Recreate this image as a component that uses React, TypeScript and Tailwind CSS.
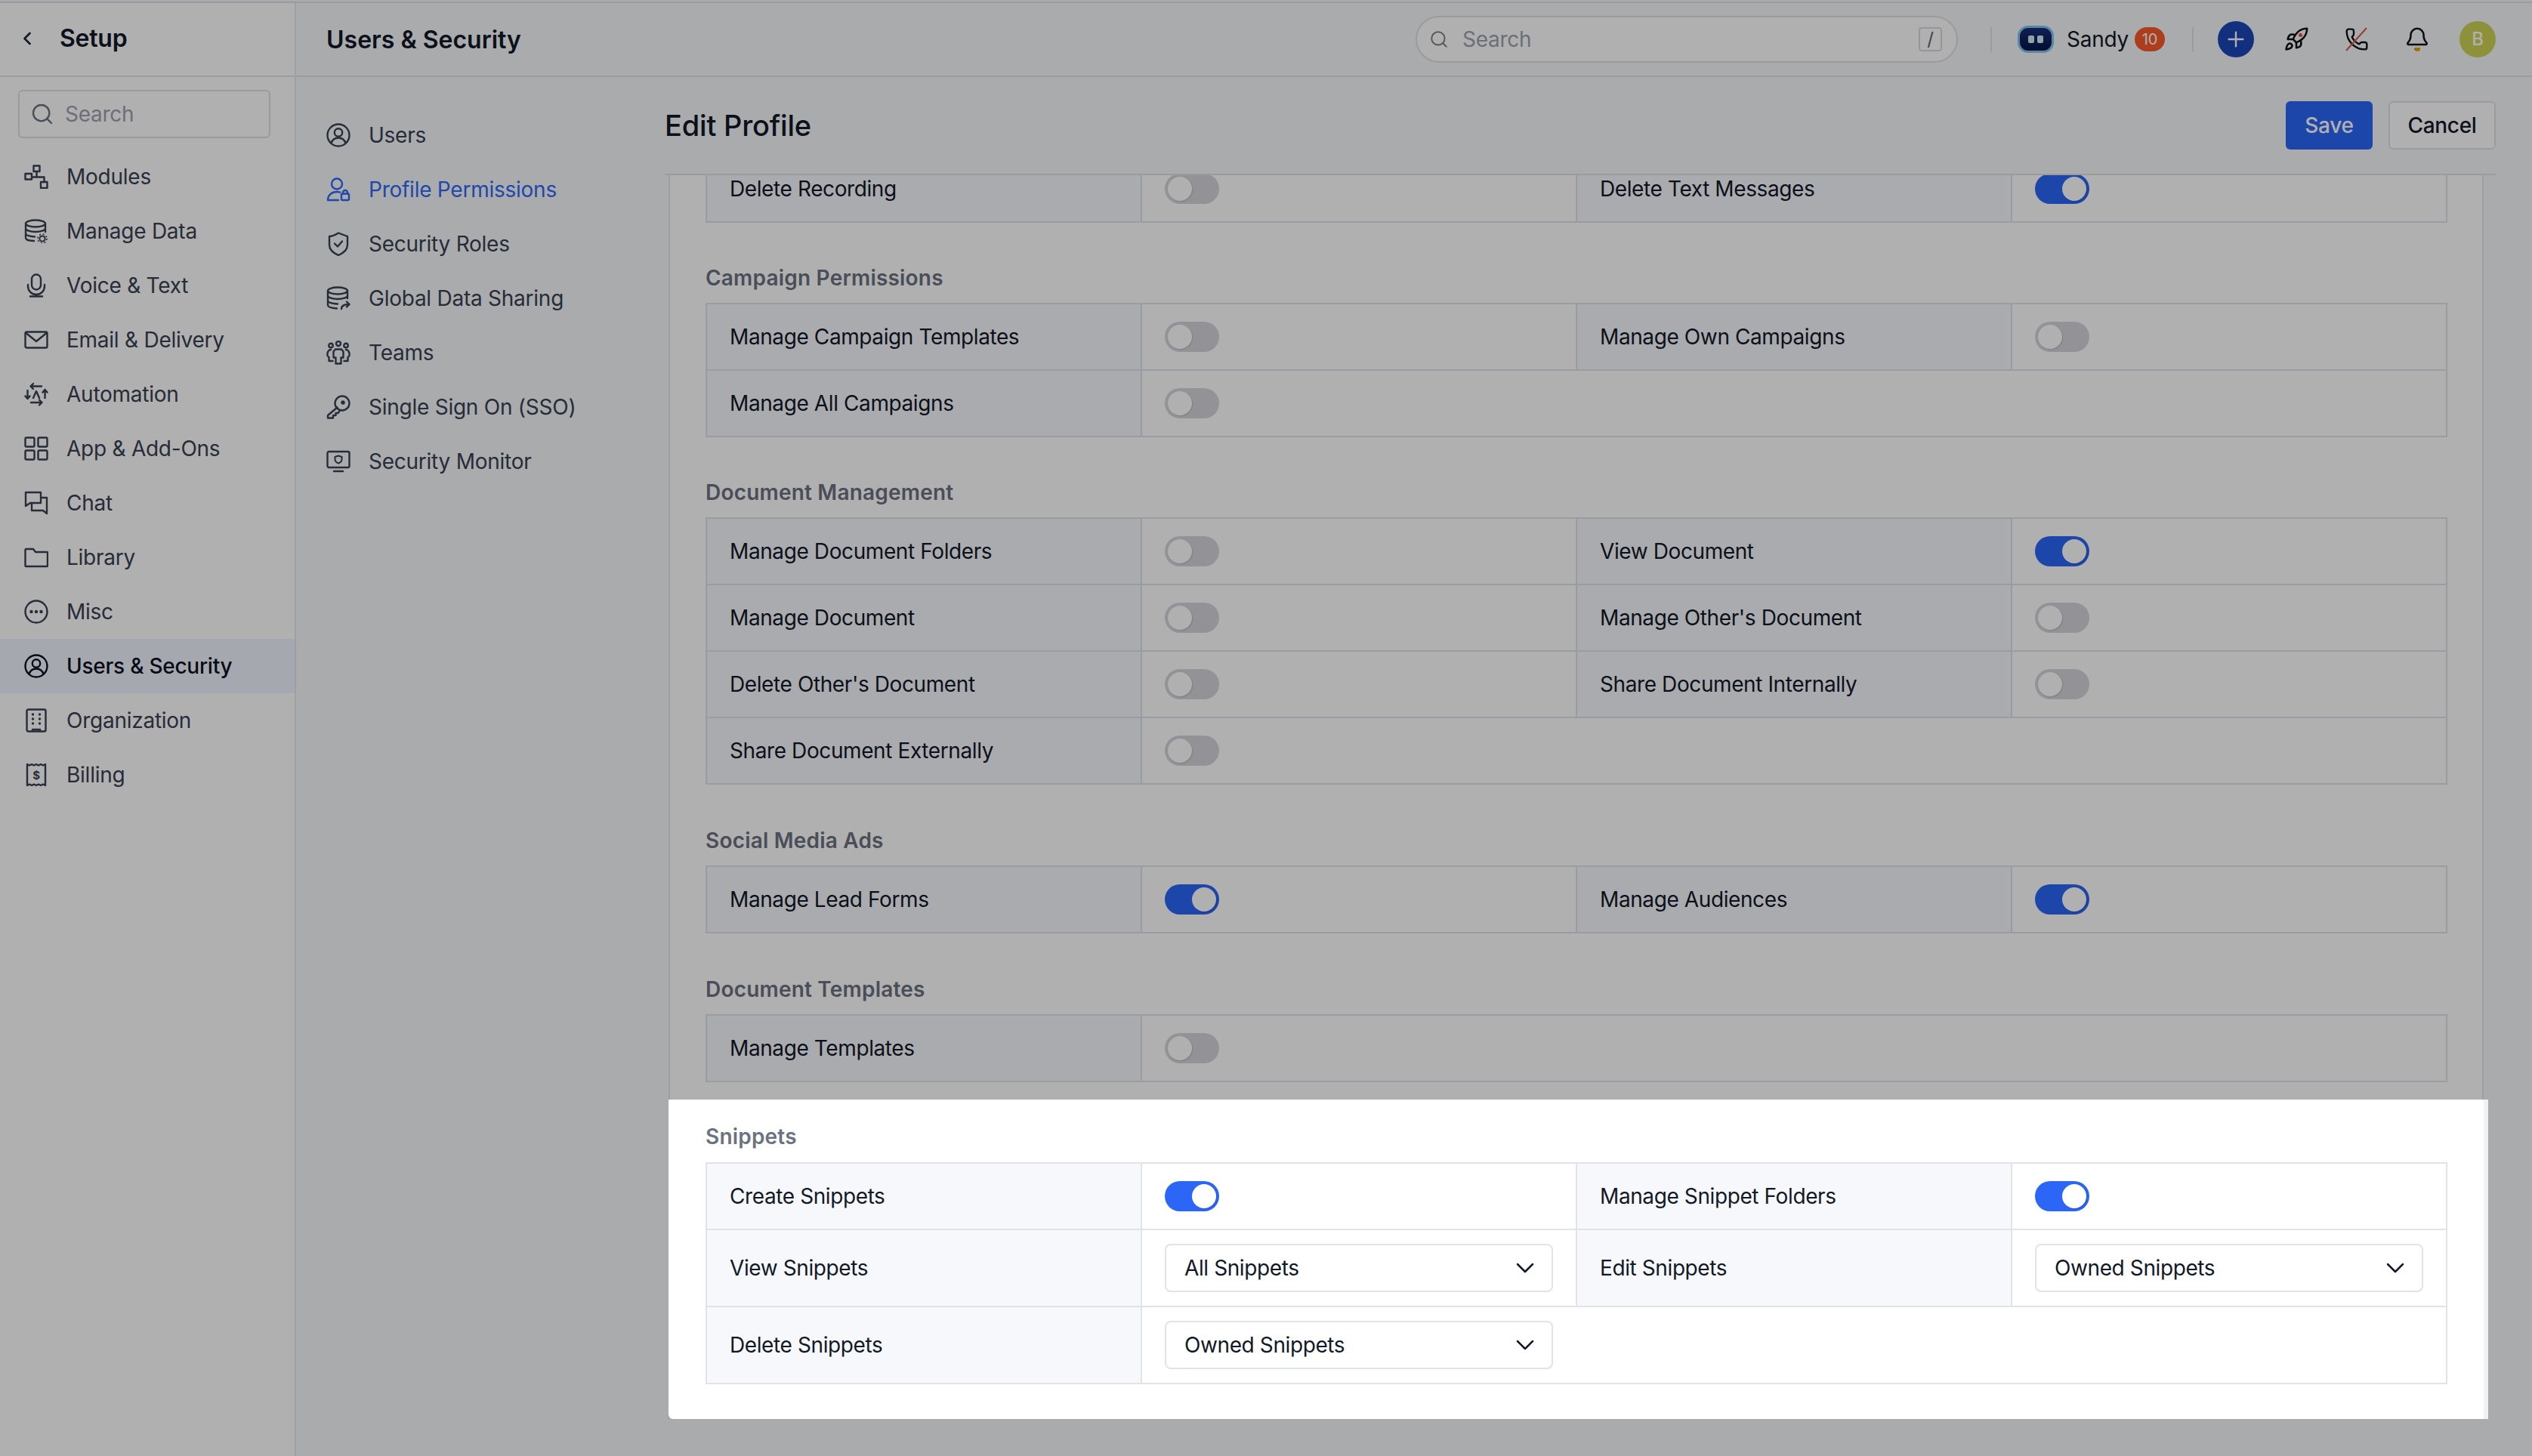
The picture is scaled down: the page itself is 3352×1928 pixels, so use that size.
import React from "react";
import { ChevronDown, ChevronLeft, Search, Plus, Rocket, Phone, Bell } from "lucide-react";

const Ic = ({ children, className = "" }: { children: React.ReactNode; className?: string }) => (
  <svg viewBox="0 0 32 32" fill="none" stroke="currentColor" strokeWidth="2.4" strokeLinecap="round" strokeLinejoin="round" className={`h-8 w-8 shrink-0 ${className}`}>
    {children}
  </svg>
);

const icons: Record<string, React.ReactNode> = {
  modules: (<><rect x="12.5" y="1.5" width="8" height="7.5" /><rect x="1.5" y="12" width="8.5" height="7.5" /><rect x="22" y="23" width="8.5" height="8" /><path d="M16.5 9v7.5M10 16.5h16.5V23" /></>),
  data: (<><ellipse cx="15" cy="6" rx="13" ry="4.5" /><path d="M2 6v19c0 2.5 5 4 11 4M28 6v11M2 12.5c0 2.5 6 4.5 13 4.5s13-2 13-4.5M2 19c0 2.4 5 4 12 4.5" /><circle cx="24" cy="26" r="3.6" strokeWidth="2" /><circle cx="24" cy="26" r="6" strokeWidth="1.6" strokeDasharray="2 2.7" strokeLinecap="butt" /></>),
  mic: (<><rect x="10" y="1.5" width="12" height="20" rx="6" /><path d="M5 15v2a11 11 0 0 0 22 0v-2M16 28v2.5M8 30.5h16" /></>),
  mail: (<><rect x="1.5" y="5.5" width="29" height="21" rx="2" /><path d="M2.5 7 16 18 29.5 7" /></>),
  auto: (<><path d="M9 5.5h14M12 2 8.5 5.5 12 9M9 27h14M20 23.5l3.5 3.5-3.5 3.5M4.5 11v11M1.5 18.5 4.5 22M7.5 18.5 4.5 22M27.5 10v11M24.5 13.5l3-3.5 3 3.5M12 21l4-9 4 9" /></>),
  apps: (<><rect x="1.5" y="1.5" width="12" height="12" rx="1.5" /><rect x="18.5" y="1.5" width="12" height="12" rx="1.5" /><rect x="1.5" y="18.5" width="12" height="12" rx="1.5" /><rect x="18.5" y="18.5" width="12" height="12" rx="1.5" /></>),
  chat: (<><path d="M2 2h20v14H8l-6 4zM22 9h8v21l-5-4H10v-10" /></>),
  folder: (<><path d="M1.5 6a1 1 0 0 1 1-1h9.5l3 4h15a1 1 0 0 1 1 1v17a1 1 0 0 1-1 1H2.5a1 1 0 0 1-1-1z" /></>),
  misc: (<><circle cx="16" cy="16" r="14.5" /><circle cx="9.5" cy="16" r="1" fill="currentColor" /><circle cx="16" cy="16" r="1" fill="currentColor" /><circle cx="22.5" cy="16" r="1" fill="currentColor" /></>),
  user: (<><circle cx="16" cy="16" r="14.5" /><circle cx="16" cy="12.5" r="5.2" /><path d="M6.5 26.5c1.5-4.5 5.2-7 9.5-7s8 2.500 9.500 7" /></>),
  org: (<><rect x="3.500" y="1.500" width="25" height="29" rx="2" /><path d="M11 30v-2h10v2" /><g fill="currentColor" stroke="none"><circle cx="11.500" cy="8" r="1.700" /><circle cx="20.500" cy="8" r="1.700" /><circle cx="11.500" cy="14" r="1.700" /><circle cx="20.500" cy="14" r="1.700" /><circle cx="11.500" cy="20" r="1.700" /><circle cx="20.500" cy="20" r="1.700" /></g></>),
  bill: (<><path d="M4 2v28l3-1.500 3 1.500 3-1.500 3 1.500 3-1.500 3 1.500 3-1.500 3 1.500V2l-3 1.500-3-1.500-3 1.500-3-1.500-3 1.500-3-1.500-3 1.500z" /><text x="16" y="21.500" textAnchor="middle" fontSize="15" fontWeight="700" fill="currentColor" stroke="none" fontFamily="Inter, sans-serif">$</text></>),
  profile: (<><circle cx="14" cy="8.500" r="7" /><path d="M2 30c0-6.500 5-11 12-11 1.500 0 2.800.2 4 .7M2 30h14" /><rect x="20" y="21.500" width="10" height="8.500" rx="1.500" /><path d="M22 21.500v-1.500a3 3 0 0 1 6 0v1.500" /></>),
  shield: (<><path d="M16 1.500 28 6v11c0 7-5 11-12 14C9 28 4 24 4 17V6c5 0 8-2 12-4.500z" /><path d="M11 15.500l4 4 6-7" /></>),
  share: (<><ellipse cx="15" cy="6" rx="13" ry="4.500" /><path d="M2 6v19c0 2.500 5 4 12 4.500M28 6v10M2 12.500c0 2.500 6 4.500 13 4.500s13-2 13-4.500M2 19c0 2.400 5 4 13 4.500M20 30c0-4 3-6 10-6M27 20.500l3.500 3.500-3.500 3.500" /></>),
  teams: (<><circle cx="16" cy="4" r="3" /><circle cx="6" cy="6.500" r="2.700" /><circle cx="26" cy="6.500" r="2.700" /><path d="M12 11.500h8l2.500 3v8h-3v8h-7v-8h-3v-8zM6 12c-3 0-5 3-4.500 8l2 2v5h5M26 12c3 0 5 3 4.500 8l-2 2v5h-5" /></>),
  key: (<><circle cx="21" cy="11" r="9.500" /><circle cx="22" cy="10" r="1.500" fill="currentColor" /><path d="M14.500 16.500 2 27v3.500h7V27h3.500v-3h3l2-3" /></>),
  monitor: (<><rect x="1.500" y="3" width="29" height="21" rx="2" /><path d="M10 29h12" /><path d="M16 8.500l4.500 1.500v3.500c0 2.500-2 4-4.500 5-2.500-1-4.500-2.500-4.500-5V10z" strokeWidth="2" /></>),
};

const leftMenu = [
  ["modules", "Modules"], ["data", "Manage Data"], ["mic", "Voice & Text"], ["mail", "Email & Delivery"],
  ["auto", "Automation"], ["apps", "App & Add-Ons"], ["chat", "Chat"], ["folder", "Library"],
  ["misc", "Misc"], ["user", "Users & Security"], ["org", "Organization"], ["bill", "Billing"],
];

const subMenu = [
  ["user", "Users"], ["profile", "Profile Permissions"], ["shield", "Security Roles"], ["share", "Global Data Sharing"],
  ["teams", "Teams"], ["key", "Single Sign On (SSO)"], ["monitor", "Security Monitor"],
];

const Toggle = ({ on }: { on: boolean }) => (
  <div className={`flex h-10 w-[72px] items-center rounded-full px-1 ${on ? "justify-end bg-[#2b66f6]" : "justify-start bg-[#d5d6db]"}`}>
    <div className="h-8 w-8 rounded-full bg-white shadow-[1px_1px_2px_rgba(0,0,0,0.15)]" />
  </div>
);

const SelectBox = ({ value }: { value: string }) => (
  <div className="flex h-16 w-[514px] items-center justify-between rounded-[8px] border-2 border-[#e1e3ea] bg-white pl-[24px] pr-[15px] text-[#111827]">
    <span>{value}</span>
    <ChevronDown size={40} strokeWidth={1.5} />
  </div>
);

type Cell = [string, boolean | string];

const Value = ({ v }: { v: boolean | string }) =>
  typeof v === "string" ? <SelectBox value={v} /> : <Toggle on={v} />;

const Row = ({ cells, tall = false }: { cells: Cell[]; tall?: boolean }) => (
  <div className={`grid grid-cols-[576px_576px_576px_1fr] border-t-2 border-[#e1e3ea] ${tall ? "h-[102px]" : "h-[88px]"}`}>
    {cells.map(([label, v], i) => (
      <React.Fragment key={label}>
        <div className="flex items-center border-r-2 border-[#e1e3ea] bg-[#f6f8fc] pl-[30px] text-[#111827]">{label}</div>
        <div className={`flex items-center pl-[30px] ${i === 0 && cells.length > 1 ? "border-r-2 border-[#e1e3ea]" : ""}`}>
          <Value v={v} />
        </div>
      </React.Fragment>
    ))}
  </div>
);

const Table = ({ rows, tallFrom = 99 }: { rows: Cell[][]; tallFrom?: number }) => (
  <div className="w-[2306px] border-x-2 border-b-2 border-[#e1e3ea] bg-white text-[28px] tracking-[-0.4px]">
    {rows.map((r, i) => (
      <Row key={r[0][0]} cells={r} tall={i >= tallFrom} />
    ))}
  </div>
);

const sections: { title: string; mt: string; rows: Cell[][] }[] = [
  {
    title: "Campaign Permissions",
    mt: "mt-[53px]",
    rows: [
      [["Manage Campaign Templates", false], ["Manage Own Campaigns", false]],
      [["Manage All Campaigns", false]],
    ],
  },
  {
    title: "Document Management",
    mt: "mt-[53px]",
    rows: [
      [["Manage Document Folders", false], ["View Document", true]],
      [["Manage Document", false], ["Manage Other's Document", false]],
      [["Delete Other's Document", false], ["Share Document Internally", false]],
      [["Share Document Externally", false]],
    ],
  },
  { title: "Social Media Ads", mt: "mt-[54px]", rows: [[["Manage Lead Forms", true], ["Manage Audiences", true]]] },
  { title: "Document Templates", mt: "mt-[54px]", rows: [[["Manage Templates", false]]] },
];

export default function App() {
  return (
    <div className="h-screen w-full overflow-hidden bg-[#f6f8fb] pt-[2px] font-['Inter',sans-serif] text-[28px] tracking-[-0.25px] text-[#374151]">
      <div className="flex h-[1926px] border-t-2 border-[#dfe1e6]">
        <aside className="w-[392px] shrink-0 border-r-2 border-[#e5e7ec] bg-white">
          <div className="flex h-[98px] items-center border-b-2 border-[#e1e3e9] pb-[2px] pl-[22px] text-[#111827]">
            <ChevronLeft size={28} strokeWidth={2.4} className="text-[#1f2a44]" />
            <span className="ml-[29px] text-[32px] font-semibold">Setup</span>
          </div>
          <div className="mx-[24px] mt-[17px] flex h-[64px] w-[334px] items-center rounded-[6px] border-2 border-[#dfe1e7] pl-[14px] text-[#9ca3af]">
            <Search size={32} strokeWidth={1.8} className="text-[#6b7280]" />
            <span className="ml-[14px]">Search</span>
          </div>
          <nav className="mt-[15px]">
            {leftMenu.map(([icon, label]) => {
              const active = label === "Users & Security";
              return (
                <div key={label} className={`flex h-[72px] items-center gap-[24px] pl-[32px] ${active ? "bg-[#f1f4ff] font-medium text-[#0b1020]" : ""}`}>
                  <Ic>{icons[icon]}</Ic>
                  <span>{label}</span>
                </div>
              );
            })}
          </nav>
        </aside>

        <div className="flex min-w-0 flex-1 flex-col">
          <header className="flex h-[98px] shrink-0 items-center whitespace-nowrap border-b-2 border-[#e1e3e9] pl-[40px] pr-[48px]">
            <span className="mt-[2px] shrink-0 text-[32px] font-semibold tracking-normal text-[#111827]">Users &amp; Security</span>
            <div className="ml-auto flex h-[62px] w-[718px] shrink-0 items-center rounded-full border-2 border-[#dfe1e6] bg-white pl-[16px] pr-[19px] text-[#9ca3af]">
              <Search size={26} strokeWidth={1.8} className="text-[#7b808a]" />
              <span className="ml-[18px]">Search</span>
              <span className="ml-auto flex h-8 w-[31px] items-center justify-center rounded-[4px] border-2 border-[#d8dade] text-[24px] text-[#5b5f6a]">/</span>
            </div>
            <div className="ml-[43px] h-[33px] w-[2px] shrink-0 bg-[#dfe1e6]" />
            <div className="ml-[34px] flex h-9 w-12 shrink-0 items-center justify-center gap-[4px] rounded-[14px] border-[3px] border-[#7fc4ef] bg-linear-to-b from-[#1a2f78] to-[#061447]">
              <span className="h-[10px] w-[8px] rounded-[2px] bg-[#cdeef2]" />
              <span className="h-[10px] w-[8px] rounded-[2px] bg-[#cdeef2]" />
            </div>
            <span className="ml-[17px] w-[81px] shrink-0 text-[#111827]">Sandy</span>
            <span className="ml-[9px] flex h-8 w-10 shrink-0 items-center justify-center rounded-full bg-[#f95a2a] text-[20px] text-white">10</span>
            <div className="ml-[36px] h-[33px] w-[2px] shrink-0 bg-[#dfe1e6]" />
            <div className="ml-[32px] flex h-12 w-12 shrink-0 items-center justify-center rounded-full bg-[#1c46b9] text-white">
              <Plus size={32} strokeWidth={1.8} />
            </div>
            <div className="relative ml-[39px] shrink-0 text-[#111]">
              <Rocket size={34} strokeWidth={1.8} />
              <span className="absolute left-[20px] top-[9px] h-[5px] w-[5px] rounded-full bg-[#ef4444]" />
            </div>
            <div className="relative ml-[47px] shrink-0 text-[#111]">
              <Phone size={32} strokeWidth={1.8} />
              <svg viewBox="0 0 32 32" className="absolute left-0 top-0 h-8 w-8">
                <path d="M29 1 2 31" stroke="#e0554f" strokeWidth="2" />
              </svg>
            </div>
            <div className="relative ml-[47px] shrink-0 text-[#111]">
              <Bell size={34} strokeWidth={1.8} />
              <span className="absolute bottom-[1px] left-[14px] h-[5px] w-[7px] rounded-b-full bg-[#f59e0b]" />
            </div>
            <div className="ml-[39px] flex h-12 w-12 shrink-0 items-center justify-center rounded-full bg-[#cdd253] text-[24px] font-medium text-white">B</div>
          </header>

          <div className="flex min-h-0 flex-1">
            <nav className="w-[488px] shrink-0 pt-[41px]">
              {subMenu.map(([icon, label]) => {
                const active = label === "Profile Permissions";
                return (
                  <div key={label} className={`flex h-[72px] items-center gap-[24px] pl-[40px] ${active ? "text-[#2d69f6]" : ""}`}>
                    <Ic>{icons[icon]}</Ic>
                    <span>{label}</span>
                  </div>
                );
              })}
            </nav>

            <main className="flex min-w-0 flex-1 flex-col pr-[48px]">
              <div className="flex h-[130px] shrink-0 items-center justify-between border-b-2 border-[#dfe1e6]">
                <h1 className="text-[38px] font-medium tracking-[-0.2px] text-[#111827]">Edit Profile</h1>
                <div className="flex gap-[21px]">
                  <button className="h-16 w-[115px] rounded-[6px] bg-[#2966f6] text-[28px] font-medium tracking-[-0.3px] text-white">Save</button>
                  <button className="h-16 w-[142px] rounded-[6px] border-2 border-[#e1e3e9] bg-white text-[28px] font-medium tracking-[-0.3px] text-[#111827]">Cancel</button>
                </div>
              </div>

              <div className="ml-[5px] mr-[10px] flex-1 pr-[6px]">
                <div className="border-x-2 border-[#e5e7ec] bg-white pl-[47px]">
                  <div className="h-[63px] overflow-hidden">
                    <div className="-mt-[27px]">
                      <Table rows={[[["Delete Recording", false], ["Delete Text Messages", true]]]} />
                    </div>
                  </div>
                  {sections.map((s) => (
                    <section key={s.title}>
                      <h2 className={`mb-[13px] h-10 text-[28px] font-semibold leading-10 tracking-[0.2px] text-[#6b7280] ${s.mt}`}>{s.title}</h2>
                      <Table rows={s.rows} />
                    </section>
                  ))}
                  <section className="relative z-10 -ml-[49px] -mr-[8px] mt-[23px] rounded-bl-[6px] border-r-[6px] border-[#f1f2f6] bg-white pb-[46px] pl-[49px] pr-[48px] pt-[29px] shadow-[0_0_0_4000px_rgba(0,0,0,0.31)]">
                    <h2 className="mb-[14px] h-10 text-[28px] font-semibold leading-10 tracking-[0.2px] text-[#6b7280]">Snippets</h2>
                    <Table
                      tallFrom={1}
                      rows={[
                        [["Create Snippets", true], ["Manage Snippet Folders", true]],
                        [["View Snippets", "All Snippets"], ["Edit Snippets", "Owned Snippets"]],
                        [["Delete Snippets", "Owned Snippets"]],
                      ]}
                    />
                  </section>
                </div>
              </div>
            </main>
          </div>
        </div>
      </div>
    </div>
  );
}
